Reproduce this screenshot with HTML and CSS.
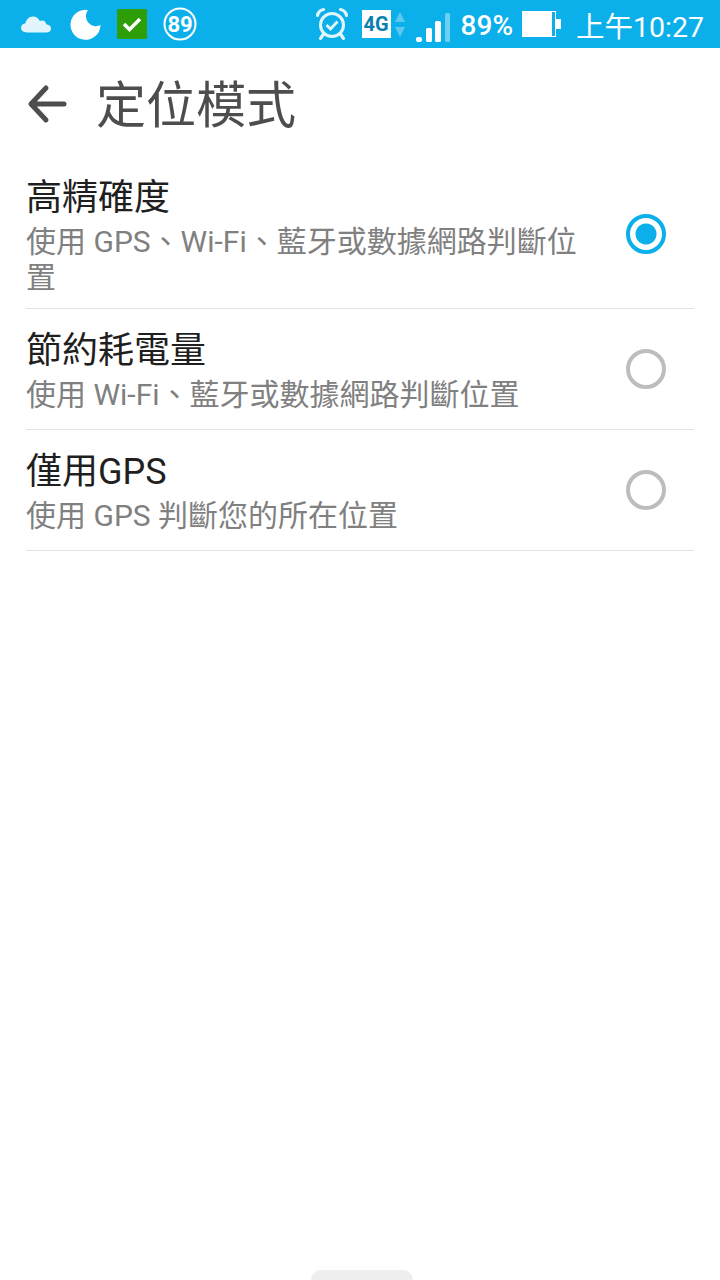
FILE: index.html
```html
<!DOCTYPE html>
<html lang="zh-Hant">
<head>
  <meta charset="UTF-8" />
  <title>定位模式</title>
  <link rel="stylesheet" href="styles.css">
</head>
<body>

<div class="status-bar">
  <div class="status-left">
    <svg class="ic-cloud" width="32" height="20" viewBox="0 0 32 20"><path d="M7 18.500C3.500 18.500 1 16.500 1 13.800 1 11.300 3 9.500 5.500 9.300 6.200 5.300 9.200 2.500 13 2.500c3.200 0 5.700 1.800 6.800 4.600 1-.6 2-.8 3-.6 2 .4 3.200 2 3.400 3.700 2.800.2 4.800 1.900 4.800 4.200 0 2.500-2 4.100-4.800 4.100z" fill="#e3f5fc"/></svg>
    <svg class="ic-moon" width="32" height="32" viewBox="0 0 32 32"><path d="M18 2A15 15 0 1 0 30.500 17A10 10 0 0 1 18 2z" fill="#fff"/></svg>
    <div class="ic-check">
      <svg width="22" height="18" viewBox="0 0 22 18"><path d="M3 9l5.500 5.500L19 4" fill="none" stroke="#fff" stroke-width="3.500"/></svg>
    </div>
    <div class="ic-level">
      <svg width="34" height="34" viewBox="0 0 34 34"><circle cx="17" cy="17" r="15.500" fill="none" stroke="#fff" stroke-width="2"/></svg>
      <span>89</span>
    </div>
  </div>
  <div class="status-right">
    <svg class="ic-alarm" width="34" height="34" viewBox="0 0 34 34" fill="none" stroke="#e3f5fc">
      <circle cx="17" cy="18" r="11.500" stroke-width="3"/>
      <path d="M11.500 18l4 4 7-7.500" stroke-width="2.800"/>
      <path d="M2.500 8.500Q3.500 3.500 8.500 2.500M31.500 8.500Q30.500 3.500 25.500 2.500M8.500 27l-3 4.500M25.500 27l3 4.500" stroke-width="3.200" stroke-linecap="round"/>
    </svg>
    <div class="ic-network">4G</div>
    <div class="ic-arrows"><i class="arrow-up"></i><i class="arrow-down"></i></div>
    <svg class="ic-signal" width="34" height="30" viewBox="0 0 34 30">
      <rect x="0" y="24" width="6" height="5" rx="2" fill="#fff"/>
      <rect x="10" y="15" width="6" height="14" rx="1.500" fill="#fff"/>
      <rect x="19" y="8" width="6" height="21" rx="1.500" fill="#fff"/>
      <rect x="29" y="0" width="5" height="29" rx="1.500" fill="#6cd0f2"/>
    </svg>
    <span class="battery-text">89%</span>
    <div class="ic-battery"><div class="battery-body"><div class="battery-level"></div></div><div class="battery-tip"></div></div>
    <span class="clock">上午10:27</span>
  </div>
</div>

<div class="title-bar">
  <svg class="back" width="40" height="40" viewBox="0 0 40 40"><path d="M37 20H5M19 4L4 20l15 16" fill="none" stroke="#4d4d4d" stroke-width="5" stroke-linecap="round" stroke-linejoin="round"/></svg>
  <h1>定位模式</h1>
</div>

<div class="mode-list">
  <div class="mode-row first">
    <div class="mode-text">
      <div class="mode-name">高精確度</div>
      <div class="mode-desc">使用 GPS、Wi-Fi、藍牙或數據網路判斷位置</div>
    </div>
    <div class="radio checked"></div>
  </div>
  <div class="mode-row">
    <div class="mode-text">
      <div class="mode-name">節約耗電量</div>
      <div class="mode-desc">使用 Wi-Fi、藍牙或數據網路判斷位置</div>
    </div>
    <div class="radio"></div>
  </div>
  <div class="mode-row">
    <div class="mode-text">
      <div class="mode-name">僅用GPS</div>
      <div class="mode-desc">使用 GPS 判斷您的所在位置</div>
    </div>
    <div class="radio"></div>
  </div>
</div>

<div class="spacer"></div>
<div class="nav-handle"></div>

</body>
</html>
```

FILE: styles.css
```css
* {
  box-sizing: border-box;
  margin: 0;
  padding: 0;
}

html, body {
  height: 100%;
}

body {
  display: flex;
  flex-direction: column;
  overflow: hidden;
  background: #fff;
  font-family: Roboto, "Noto Sans CJK TC", sans-serif;
}

/* Status bar */
.status-bar {
  display: flex;
  justify-content: space-between;
  align-items: center;
  height: 48px;
  padding: 0 16px 0 20px;
  background: #0bb0ea;
  color: #fff;
}

.status-left,
.status-right {
  display: flex;
  align-items: center;
}

.ic-moon {
  margin-left: 18px;
}

.ic-check {
  display: flex;
  align-items: center;
  justify-content: center;
  width: 30px;
  height: 30px;
  margin-left: 15px;
  border-radius: 2px;
  background: #2d9e08;
}

.ic-level {
  display: flex;
  align-items: center;
  justify-content: center;
  position: relative;
  width: 34px;
  height: 34px;
  margin-left: 16px;
  font-size: 22px;
  font-weight: 700;
}

.ic-level svg {
  position: absolute;
  top: 0;
  left: 0;
}

.ic-network {
  width: 29px;
  height: 28px;
  margin-left: 13px;
  background: #fff;
  color: #0a7fb0;
  font-size: 20px;
  font-weight: 700;
  line-height: 29px;
  text-align: center;
}

.ic-arrows {
  display: flex;
  flex-direction: column;
  gap: 5px;
  margin-left: 4px;
}

.arrow-up,
.arrow-down {
  display: block;
  border-left: 5.500px solid transparent;
  border-right: 5.500px solid transparent;
}

.arrow-up {
  border-bottom: 10px solid #5cc8ef;
}

.arrow-down {
  border-top: 10px solid #5cc8ef;
}

.ic-signal {
  margin-left: 11px;
  margin-top: 8px;
}

.battery-text {
  margin-left: 11px;
  padding-top: 3px;
  font-size: 28px;
  font-weight: 500;
}

.ic-battery {
  display: flex;
  align-items: center;
  margin-left: 9px;
}

.battery-body {
  width: 34px;
  height: 26px;
  border: 1px solid #fff;
}

.battery-level {
  width: 29px;
  height: 100%;
  background: #fff;
}

.battery-tip {
  width: 5px;
  height: 10px;
  background: #fff;
}

.clock {
  margin-left: 15px;
  font-size: 28.500px;
}

/* Title bar */
.title-bar {
  display: flex;
  align-items: center;
  height: 112px;
  padding-left: 27px;
}

h1 {
  margin-left: 29px;
  margin-bottom: 6px;
  color: #4d4d4d;
  font-size: 50px;
  font-weight: 400;
}

/* List */
.mode-list {
  margin: 0 26px;
}

.mode-row {
  display: flex;
  align-items: center;
  justify-content: space-between;
  height: 121px;
  padding-top: 4px;
  padding-right: 28px;
  border-bottom: 1px solid #e2e2e2;
}

.mode-row.first {
  height: 149px;
  padding-top: 5px;
}

.mode-row.first .radio {
  margin-bottom: 6px;
}

.mode-text {
  width: 560px;
}

.mode-name {
  margin-bottom: 4px;
  color: #1f1f1f;
  font-size: 36px;
  line-height: 43px;
}

.mode-desc {
  color: #808080;
  font-size: 30px;
  line-height: 36px;
}

.radio {
  width: 40px;
  height: 40px;
  margin-bottom: 4px;
  border: 4px solid #bdbdbd;
  border-radius: 50%;
}

.radio.checked {
  border-color: #0bb0ea;
  background: radial-gradient(circle, #0bb0ea 10px, #fff 11px);
}

.spacer {
  flex: 1;
}

.nav-handle {
  align-self: center;
  width: 102px;
  height: 10px;
  margin-left: 4px;
  border-radius: 10px 10px 0 0;
  background: #eeeeee;
}
```
